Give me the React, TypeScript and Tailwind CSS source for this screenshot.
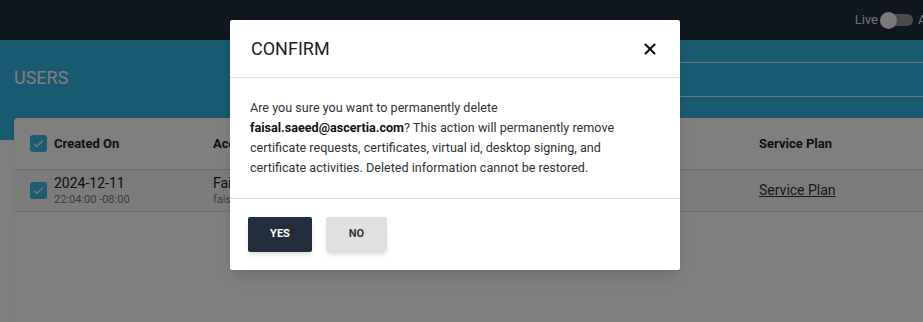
import { X } from "lucide-react";

function Checkbox() {
  return (
    <div className="flex h-[17px] w-[17px] items-center justify-center rounded-[3px] bg-[#3eb8e6]">
      <svg viewBox="0 0 24 24" className="h-[13px] w-[13px]" fill="none" stroke="#ffffff" strokeWidth="2">
        <path d="M4 12.5l5 5L20 6.5" />
      </svg>
    </div>
  );
}

export default function App() {
  return (
    <div className="relative h-[322px] w-[923px] overflow-hidden bg-white font-['Roboto',sans-serif]">
      {/* top bar */}
      <div className="flex h-[40px] items-center justify-end bg-[#222e3e]">
        <span className="text-[13px] text-[#dde3ea]">Live</span>
        <div className="relative ml-[2px] flex h-[17px] w-[34px] items-center">
          <div className="ml-[2px] h-[12px] w-[31px] rounded-full bg-[#959595]" />
          <div className="absolute left-0 top-0 h-[17px] w-[17px] rounded-full bg-[#f2f2f2] shadow" />
        </div>
        <span className="ml-[4px] w-[5px] overflow-hidden whitespace-nowrap text-[13px] text-[#dde3ea]">A</span>
      </div>

      {/* teal band */}
      <div className="flex h-[100px] items-start bg-[#34b4e0]">
        <h1 className="mt-[24px] pl-[14px] text-[18px] font-normal uppercase text-white">Users</h1>
        <div className="ml-auto mt-[22px] h-[35px] w-[400px] border-y border-white/80" />
      </div>

      {/* table card */}
      <div className="-mt-[22px] ml-[14px] w-[930px] rounded-[4px] bg-white shadow">
        <div className="flex h-[52px] items-center border-b border-[#dcdcdc] text-[13px] font-bold text-[#222222]">
          <div className="flex w-[199px] items-center gap-[7px] pl-[16px]">
            <Checkbox />
            <span>Created On</span>
          </div>
          <div className="w-[546px]">Accounts</div>
          <div>Service Plan</div>
        </div>
        <div className="flex h-[42px] items-center border-b border-[#dcdcdc] bg-[#f6f6f6]">
          <div className="flex w-[199px] items-center gap-[7px] pl-[16px]">
            <Checkbox />
            <div className="leading-none">
              <div className="text-[14px] text-[#222222]">2024-12-11</div>
              <div className="mt-[4px] text-[11px] text-[#777777]">22:04:00 -08:00</div>
            </div>
          </div>
          <div className="w-[546px] leading-none">
            <div className="text-[14px] text-[#222222]">Faisal Saeed</div>
            <div className="mt-[4px] text-[11px] text-[#777777]">faisal.saeed@ascertia.com</div>
          </div>
          <a className="text-[14px] text-[#2a3444] underline">Service Plan</a>
        </div>
        <div className="h-[120px]" />
      </div>

      {/* overlay */}
      <div className="absolute inset-0 bg-black/50" />

      {/* modal */}
      <div className="absolute left-[230px] top-[20px] w-[450px] rounded-[2px] bg-white shadow-lg">
        <div className="flex h-[58px] items-center justify-between border-b border-[#dddde3] pl-[21px] pr-[21px]">
          <h2 className="text-[18px] font-normal text-[#212121]">CONFIRM</h2>
          <X size={18} strokeWidth={2.8} className="text-[#111111]" />
        </div>
        <div className="border-b border-[#dddde3] px-[20px] pb-[20px] pt-[20px] text-[12.6px] leading-[20px] text-[#333333]">
          Are you sure you want to permanently delete <br />
          <span className="font-bold text-[#111111]">faisal.saeed@ascertia.com</span>? This action will permanently remove
          certificate requests, certificates, virtual id, desktop signing, and certificate activities. Deleted information
          cannot be restored.
        </div>
        <div className="flex gap-[14px] px-[18px] pb-[18px] pt-[18px]">
          <button className="h-[35px] w-[64px] rounded-[2px] bg-[#222d3d] text-[11px] font-bold text-white shadow-md">
            YES
          </button>
          <button className="h-[35px] w-[61px] rounded-[2px] bg-[#e0e0e0] text-[11px] font-bold text-[#333333] shadow-md">
            NO
          </button>
        </div>
      </div>
    </div>
  );
}
